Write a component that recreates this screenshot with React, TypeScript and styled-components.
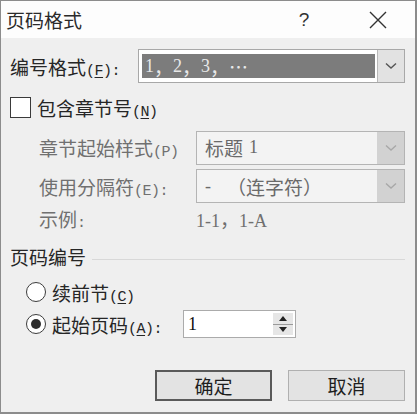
import React from "react";
import styled, { createGlobalStyle } from "styled-components";

const Global = createGlobalStyle`
  html, body { margin: 0; padding: 0; background: #f0f0f0; }
  body { font-family: "Noto Sans CJK SC", "Noto Sans", sans-serif; }
`;

const Window = styled.div`
  width: 417px;
  height: 414px;
  box-sizing: border-box;
  border: 1px solid #8c8c8c;
  border-right-width: 2px;
  border-bottom-width: 2px;
  background: #efefef;
  display: flex;
  flex-direction: column;
  color: #222;
  overflow: hidden;
`;

const TitleBar = styled.div`
  height: 37px;
  background: #fdfdfd;
  display: flex;
  align-items: center;
  padding-left: 5px;
  flex-shrink: 0;
`;

const Title = styled.div`
  font-size: 19px;
  flex: 1;
  color: #2a2a2a;
`;

const Help = styled.div`
  width: 20px;
  margin-right: 53px;
  font-size: 19px;
  text-align: center;
  font-family: "Liberation Sans", sans-serif;
  color: #333;
`;

const Close = styled.div`
  width: 22px;
  height: 22px;
  margin-right: 26px;
  display: flex;
  align-items: center;
  justify-content: center;
`;

const Body = styled.div`
  flex: 1;
  padding: 11px 10px 0 9px;
  display: flex;
  flex-direction: column;
`;

const Row = styled.div<{ $indent?: number; $mt?: number; $h?: number }>`
  display: flex;
  align-items: center;
  padding-left: ${(p) => p.$indent ?? 0}px;
  margin-top: ${(p) => p.$mt ?? 0}px;
  height: ${(p) => p.$h ?? 34}px;
`;

const Label = styled.div<{ $w?: number; $disabled?: boolean }>`
  width: ${(p) => (p.$w ? `${p.$w}px` : "auto")};
  font-size: 19px;
  white-space: nowrap;
  color: ${(p) => (p.$disabled ? "#707070" : "#262626")};
`;

const Key = styled.span`
  font-family: "Liberation Mono", "Noto Sans CJK SC", monospace;
  font-size: 15px;
  letter-spacing: -0.5px;
`;

const U = styled.span`
  text-decoration: underline;
  text-underline-offset: 2px;
`;

const Combo = styled.div<{ $disabled?: boolean }>`
  flex: 1;
  height: 34px;
  box-sizing: border-box;
  border: 1px solid ${(p) => (p.$disabled ? "#b4b4b4" : "#a8a8a8")};
  background: ${(p) => (p.$disabled ? "#f3f3f3" : "#ffffff")};
  display: flex;
  align-items: stretch;
`;

const ComboValue = styled.div<{ $selected?: boolean; $disabled?: boolean }>`
  flex: 1;
  margin: ${(p) => (p.$selected ? "4px 2px 4px 3px" : "0")};
  background: ${(p) => (p.$selected ? "#7c7c7c" : "transparent")};
  color: ${(p) => (p.$selected ? "#e8e8e8" : p.$disabled ? "#6a6a6a" : "#222")};
  display: flex;
  align-items: center;
  padding-left: ${(p) => (p.$selected ? 3 : 8)}px;
  font-size: 19px;
  white-space: pre;
`;

const Serif = styled.span`
  font-family: "Liberation Serif", "Noto Sans CJK SC", serif;
  font-size: 18px;
`;

const Gap = styled.span<{ $w: number }>`
  display: inline-block;
  width: ${(p) => p.$w}px;
`;

const DropBtn = styled.div<{ $disabled?: boolean }>`
  width: 27px;
  box-sizing: border-box;
  background: ${(p) => (p.$disabled ? "#d2d2d2" : "#e2e2e2")};
  border-left: 1px solid ${(p) => (p.$disabled ? "#d2d2d2" : "#b8b8b8")};
  display: flex;
  align-items: center;
  justify-content: center;
`;

const CheckBox = styled.div`
  width: 21px;
  height: 21px;
  box-sizing: border-box;
  border: 1.5px solid #3a3a3a;
  background: #fff;
  margin-right: 6px;
`;

const Radio = styled.div<{ $on?: boolean }>`
  width: 20px;
  height: 20px;
  box-sizing: border-box;
  border-radius: 50%;
  border: 1.5px solid #3c3c3c;
  background: #fff;
  margin-right: 6px;
  display: flex;
  align-items: center;
  justify-content: center;
  &::after {
    content: "";
    display: ${(p) => (p.$on ? "block" : "none")};
    width: 10px;
    height: 10px;
    border-radius: 50%;
    background: #2e2e2e;
  }
`;

const GroupHeader = styled.div`
  display: flex;
  align-items: center;
  margin-top: 13px;
  height: 24px;
`;

const Line = styled.div`
  flex: 1;
  height: 1px;
  background: #d8d8d8;
  margin-left: 6px;
  margin-top: 6px;
`;

const Spin = styled.div`
  width: 113px;
  height: 28px;
  box-sizing: border-box;
  border: 1px solid #ababab;
  background: #fff;
  display: flex;
  margin-left: 13px;
`;

const SpinValue = styled.div`
  flex: 1;
  display: flex;
  align-items: center;
  padding-left: 4px;
  font-family: "Liberation Serif", serif;
  font-size: 18px;
  color: #111;
`;

const SpinBtns = styled.div`
  width: 20px;
  margin: 2px 2px 2px 0;
  display: flex;
  flex-direction: column;
  gap: 1px;
  background: #9a9a9a;
`;

const SpinBtn = styled.div`
  flex: 1;
  background: #e6e6e6;
  display: flex;
  align-items: center;
  justify-content: center;
`;

const Buttons = styled.div`
  display: flex;
  justify-content: flex-end;
  gap: 16px;
  margin-top: 32px;
`;

const Button = styled.div<{ $default?: boolean }>`
  width: 117px;
  height: 31px;
  box-sizing: border-box;
  border: ${(p) => (p.$default ? "2px solid #5a5a5a" : "1px solid #b0b0b0")};
  background: #e3e3e3;
  display: flex;
  align-items: center;
  justify-content: center;
  font-size: 19px;
  color: #1e1e1e;
`;

const Chevron = ({ color }: { color: string }) => (
  <svg width="12" height="8" viewBox="0 0 12 8">
    <path d="M1 1.5 L6 6 L11 1.5" fill="none" stroke={color} strokeWidth="1.4" />
  </svg>
);

export default function App() {
  return (
    <>
      <Global />
      <Window>
        <TitleBar>
          <Title>页码格式</Title>
          <Help>?</Help>
          <Close>
            <svg width="18" height="18" viewBox="0 0 18 18">
              <path d="M1 1 L17 17 M17 1 L1 17" stroke="#333" strokeWidth="1.4" />
            </svg>
          </Close>
        </TitleBar>
        <Body>
          <Row>
            <Label $w={128}>
              编号格式<Key>(<U>F</U>):</Key>
            </Label>
            <Combo>
              <ComboValue $selected>
                <Serif>1</Serif>，<Serif>2</Serif>，<Serif>3</Serif>，…
              </ComboValue>
              <DropBtn>
                <Chevron color="#555" />
              </DropBtn>
            </Combo>
          </Row>
          <Row $mt={12} $h={24}>
            <CheckBox />
            <Label>
              包含章节号<Key>(<U>N</U>)</Key>
            </Label>
          </Row>
          <Row $indent={29} $mt={12} $h={33}>
            <Label $w={157} $disabled>
              章节起始样式<Key>(P)</Key>
            </Label>
            <Combo $disabled>
              <ComboValue $disabled>
                标题<Gap $w={6} />
                <Serif>1</Serif>
              </ComboValue>
              <DropBtn $disabled>
                <Chevron color="#a8a8a8" />
              </DropBtn>
            </Combo>
          </Row>
          <Row $indent={29} $mt={5} $h={34}>
            <Label $w={157} $disabled>
              使用分隔符<Key>(E):</Key>
            </Label>
            <Combo $disabled>
              <ComboValue $disabled>
                <Serif>-</Serif>
                <Gap $w={16} />（连字符）
              </ComboValue>
              <DropBtn $disabled>
                <Chevron color="#a8a8a8" />
              </DropBtn>
            </Combo>
          </Row>
          <Row $indent={29} $mt={2} $h={26}>
            <Label $w={157} $disabled>
              示例<Key>:</Key>
            </Label>
            <Label $disabled>
              <Serif>1-1</Serif>，<Serif>1-A</Serif>
            </Label>
          </Row>
          <GroupHeader>
            <Label>页码编号</Label>
            <Line />
          </GroupHeader>
          <Row $indent={16} $mt={13} $h={22}>
            <Radio />
            <Label>
              续前节<Key>(<U>C</U>)</Key>
            </Label>
          </Row>
          <Row $indent={16} $mt={7} $h={28}>
            <Radio $on />
            <Label $w={118}>
              起始页码<Key>(<U>A</U>):</Key>
            </Label>
            <Spin>
              <SpinValue>1</SpinValue>
              <SpinBtns>
                <SpinBtn>
                  <svg width="8" height="5" viewBox="0 0 8 5">
                    <path d="M0 5 L4 0 L8 5 Z" fill="#222" />
                  </svg>
                </SpinBtn>
                <SpinBtn>
                  <svg width="8" height="5" viewBox="0 0 8 5">
                    <path d="M0 0 L4 5 L8 0 Z" fill="#222" />
                  </svg>
                </SpinBtn>
              </SpinBtns>
            </Spin>
          </Row>
          <Buttons>
            <Button $default>确定</Button>
            <Button>取消</Button>
          </Buttons>
        </Body>
      </Window>
    </>
  );
}
